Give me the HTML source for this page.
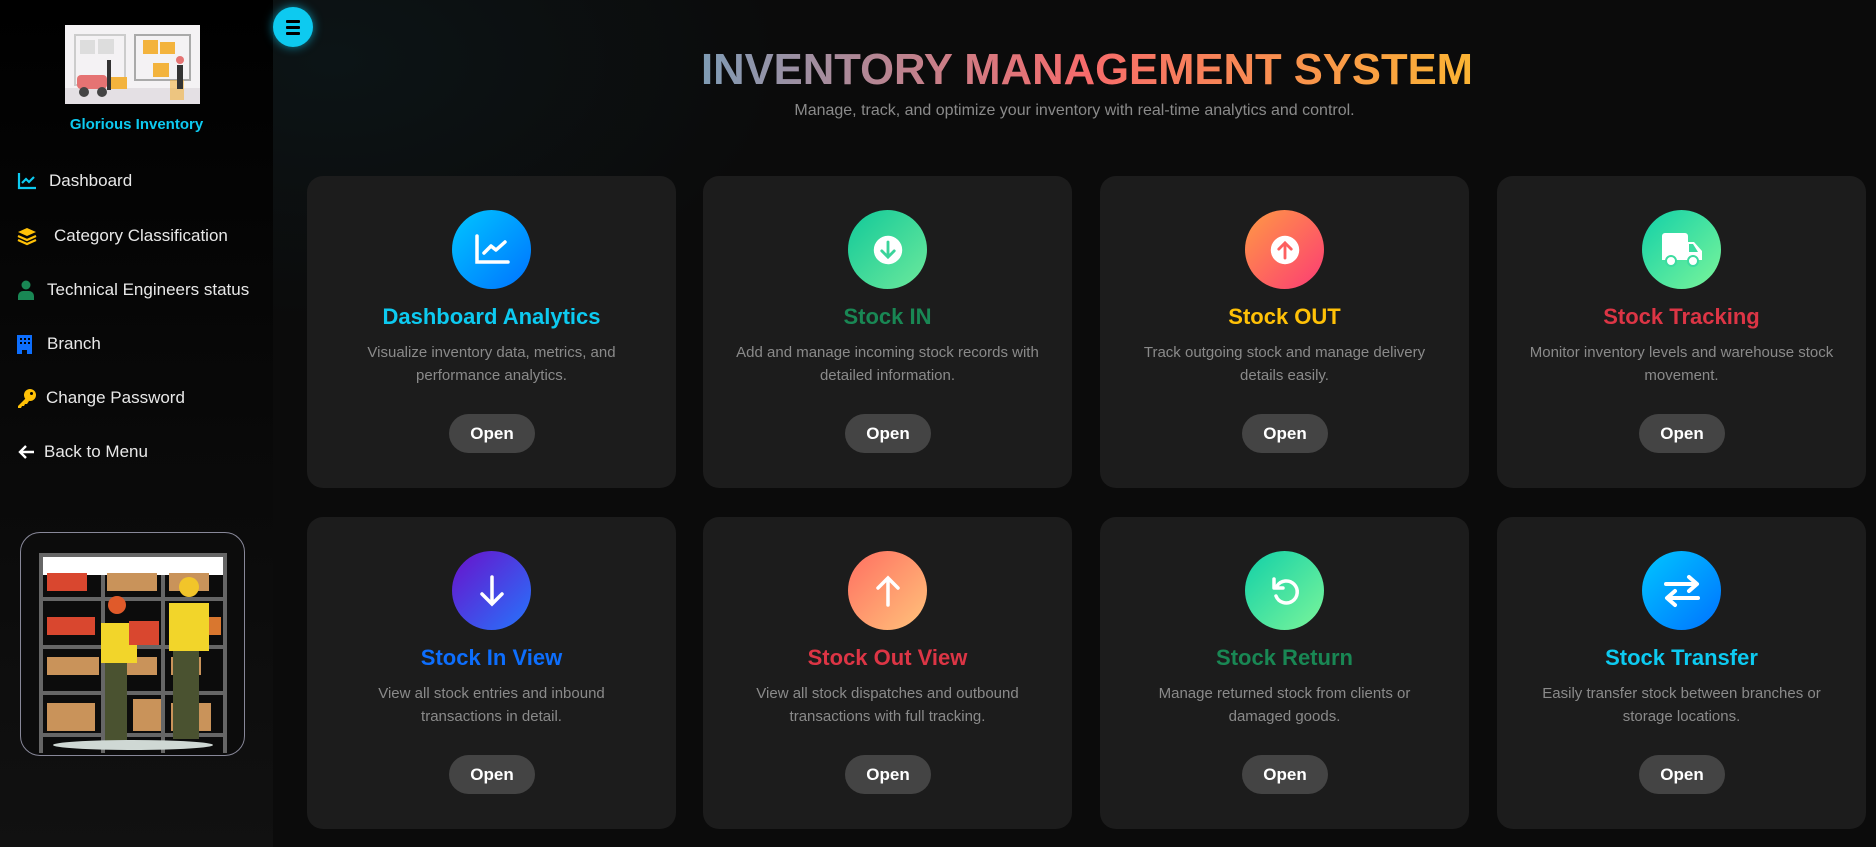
<!DOCTYPE html>
<html><head><meta charset="utf-8"><style>
*{margin:0;padding:0;box-sizing:border-box}
body{width:1876px;height:847px;overflow:hidden;background:#0a0a0a;font-family:"Liberation Sans","DejaVu Sans",sans-serif;position:relative}
.main{position:absolute;left:273px;top:0;width:1603px;height:847px;background:radial-gradient(ellipse 450px 260px at 60px 60px,#0c1416 0%,#0b0b0b 100%)}
.side{position:absolute;left:0;top:0;width:273px;height:847px;background:linear-gradient(#000 0%,#070707 40%,#111 100%)}
.brand{position:absolute;left:0;width:273px;top:116px;text-align:center;color:#0dcaf0;font-weight:bold;font-size:15px}
.nav{position:absolute;left:17px;color:#e8e8e8;font-size:17px;display:flex;align-items:center;height:24px}
.nav svg{margin-right:12px}
.ham{position:absolute;left:273px;top:7px;width:40px;height:40px;border-radius:50%;background:#0dcaf0;box-shadow:0 0 10px #0dcaf0aa}
.ham i{position:absolute;left:13px;width:14px;height:2.5px;background:#000;border-radius:1px}
.card{position:absolute;width:369px;height:312px;background:#1c1c1c;border-radius:16px;text-align:center}
.ic{position:absolute;left:145px;top:34px;width:79px;height:79px;border-radius:50%;display:flex;align-items:center;justify-content:center}
.t{position:absolute;left:0;right:0;top:128px;font-size:22px;font-weight:bold}
.d{position:absolute;left:30px;right:30px;top:165px;font-size:15px;line-height:23px;color:#8a8a8a}
.b{position:absolute;left:142px;top:238px;width:86px;height:39px;border-radius:20px;background:#444;color:#fff;font-weight:bold;font-size:17px;line-height:39px}
.sub{position:absolute;left:273px;width:1603px;top:102px;text-align:center;color:#8a8a8a;font-size:16px}
</style></head><body>
<div class="side">
<svg style="position:absolute;left:65px;top:25px" width="135" height="79" viewBox="0 0 135 79">
<rect width="135" height="79" fill="#f4f2f4"/>
<rect x="0" y="63" width="135" height="16" fill="#e4e0e4"/>
<rect x="10" y="10" width="50" height="50" fill="none" stroke="#ccc" stroke-width="2"/>
<rect x="15" y="15" width="15" height="14" fill="#ddd"/><rect x="33" y="14" width="16" height="15" fill="#ddd"/>
<rect x="70" y="10" width="55" height="45" fill="none" stroke="#aaa" stroke-width="2"/>
<rect x="78" y="15" width="15" height="14" fill="#f3b33d"/><rect x="95" y="17" width="15" height="12" fill="#f3b33d"/>
<rect x="88" y="38" width="16" height="14" fill="#f3b33d"/>
<rect x="105" y="55" width="14" height="20" fill="#f3b33d" opacity=".6"/>
<rect x="12" y="50" width="30" height="14" rx="4" fill="#e57373"/><rect x="42" y="35" width="4" height="30" fill="#333"/>
<rect x="46" y="52" width="16" height="12" fill="#f3b33d"/>
<circle cx="19" cy="67" r="5" fill="#444"/><circle cx="37" cy="67" r="5" fill="#444"/>
<rect x="112" y="40" width="6" height="24" fill="#333"/><circle cx="115" cy="35" r="4" fill="#e57373"/>
</svg>
<div class="brand">Glorious Inventory</div>
<div class="nav" style="top:169px"><svg width="20" height="18" viewBox="0 0 20 18"><path d="M2 1v15h17" fill="none" stroke="#0dcaf0" stroke-width="2.2"/><path d="M5 11l4-4 3 3 5-5" fill="none" stroke="#0dcaf0" stroke-width="2.2"/></svg>Dashboard</div>
<div class="nav" style="top:224px"><svg width="20" height="20" viewBox="0 0 20 20" style="margin-right:17px"><path d="M10 2l9 4-9 4-9-4z" fill="#ffc107"/><path d="M1 10l9 4 9-4M1 14l9 4 9-4" fill="none" stroke="#ffc107" stroke-width="2.2"/></svg>Category Classification</div>
<div class="nav" style="top:278px"><svg width="18" height="20" viewBox="0 0 18 20" style="margin-right:12px"><circle cx="9" cy="5" r="4.5" fill="#198754"/><path d="M1 20v-4a5 5 0 0 1 5-5h6a5 5 0 0 1 5 5v4z" fill="#198754"/></svg>Technical Engineers status</div>
<div class="nav" style="top:332px"><svg width="15" height="19" viewBox="0 0 15 19" style="margin-right:15px"><path d="M0 0h15v19h-5v-4h-5v4h-5z" fill="#0d6efd"/><rect x="3" y="3" width="2" height="2" fill="#000"/><rect x="7" y="3" width="2" height="2" fill="#000"/><rect x="11" y="3" width="2" height="2" fill="#000"/><rect x="3" y="7" width="2" height="2" fill="#000"/><rect x="7" y="7" width="2" height="2" fill="#000"/><rect x="11" y="7" width="2" height="2" fill="#000"/></svg>Branch</div>
<div class="nav" style="top:386px"><svg width="20" height="20" viewBox="0 0 20 20" style="margin-right:9px"><circle cx="13" cy="7" r="6" fill="#ffc107"/><path d="M9 10l-8 8v2h3l1-2h2l1-2h2l2-3z" fill="#ffc107"/><circle cx="14.5" cy="5.5" r="1.5" fill="#000"/></svg>Change Password</div>
<div class="nav" style="top:440px"><svg width="18" height="16" viewBox="0 0 18 16" style="margin-right:9px"><path d="M17 8H3M9 2L3 8l6 6" fill="none" stroke="#fff" stroke-width="2.4"/></svg>Back to Menu</div>
<div style="position:absolute;left:20px;top:532px;width:225px;height:224px;border:1.5px solid #889;border-radius:20px;overflow:hidden;background:#0c0c0c">
<svg width="225" height="224" viewBox="0 0 225 224">
<g fill="#666"><rect x="18" y="20" width="4" height="200"/><rect x="80" y="20" width="4" height="200"/><rect x="140" y="20" width="4" height="200"/><rect x="202" y="20" width="4" height="200"/>
<rect x="18" y="20" width="188" height="4"/><rect x="18" y="64" width="188" height="4"/><rect x="18" y="112" width="188" height="4"/><rect x="18" y="158" width="188" height="4"/><rect x="18" y="200" width="188" height="4"/></g>
<rect x="22" y="24" width="180" height="18" fill="#fff"/>
<rect x="26" y="40" width="40" height="18" fill="#d9472f"/><rect x="86" y="40" width="50" height="18" fill="#c9935a"/><rect x="148" y="40" width="40" height="18" fill="#c9935a"/>
<rect x="26" y="84" width="48" height="18" fill="#d9472f"/><rect x="150" y="84" width="50" height="18" fill="#d9772f"/>
<rect x="26" y="124" width="52" height="18" fill="#c9935a"/><rect x="86" y="124" width="50" height="18" fill="#c9935a"/><rect x="150" y="124" width="30" height="18" fill="#c9935a"/>
<rect x="26" y="170" width="48" height="28" fill="#c9935a"/><rect x="112" y="166" width="28" height="32" fill="#c9935a"/><rect x="150" y="170" width="40" height="28" fill="#c9935a"/>
<rect x="80" y="90" width="36" height="40" fill="#f2d52a"/><rect x="84" y="130" width="22" height="78" fill="#4a5230"/><circle cx="96" cy="72" r="9" fill="#e05a2a"/>
<rect x="148" y="70" width="40" height="48" fill="#f2d52a"/><rect x="152" y="118" width="26" height="88" fill="#4a5230"/><circle cx="168" cy="54" r="10" fill="#f2c52a"/>
<rect x="108" y="88" width="30" height="24" fill="#d9472f"/>
<ellipse cx="112" cy="212" rx="80" ry="5" fill="#cfd8d4"/>
</svg></div>
</div>
<div class="main"></div>
<div class="ham"><i style="top:13px"></i><i style="top:19px"></i><i style="top:25px"></i></div>
<svg style="position:absolute;left:698px;top:38px" width="780" height="56">
<defs><linearGradient id="tg" x1="0" x2="1"><stop offset="0" stop-color="#7f9cb5"/><stop offset=".5" stop-color="#f76b6b"/><stop offset="1" stop-color="#fbb433"/></linearGradient></defs>
<text x="3" y="46" textLength="772" lengthAdjust="spacingAndGlyphs" font-family="Liberation Sans,sans-serif" font-weight="bold" font-size="44" fill="url(#tg)">INVENTORY MANAGEMENT SYSTEM</text></svg>
<div class="sub">Manage, track, and optimize your inventory with real-time analytics and control.</div>

<div class="card" style="left:307px;top:176px"><div class="ic" style="background:linear-gradient(135deg,#00c6ff,#0072ff)"><svg width="36" height="32" viewBox="0 0 36 32"><path d="M3 2v26h31" fill="none" stroke="#fff" stroke-width="3.5" stroke-linecap="round"/><path d="M10 19l7-7 5 4 9-8" fill="none" stroke="#fff" stroke-width="3.5" stroke-linecap="round" stroke-linejoin="round"/></svg></div><div class="t" style="color:#0dcaf0">Dashboard Analytics</div><div class="d">Visualize inventory data, metrics, and performance analytics.</div><div class="b">Open</div></div>
<div class="card" style="left:703px;top:176px"><div class="ic" style="background:linear-gradient(135deg,#11c99a,#6de99b)"><svg width="32" height="32" viewBox="0 0 36 36"><circle cx="18" cy="18" r="16" fill="#fff"/><path d="M18 9v16M11 19l7 7 7-7" fill="none" stroke="#3bd49a" stroke-width="3.2" stroke-linecap="round"/></svg></div><div class="t" style="color:#198754">Stock IN</div><div class="d">Add and manage incoming stock records with detailed information.</div><div class="b">Open</div></div>
<div class="card" style="left:1100px;top:176px"><div class="ic" style="background:linear-gradient(135deg,#ff9a44,#fc3b74)"><svg width="32" height="32" viewBox="0 0 36 36"><circle cx="18" cy="18" r="16" fill="#fff"/><path d="M18 27V11M11 17l7-7 7 7" fill="none" stroke="#fd6060" stroke-width="3.2" stroke-linecap="round"/></svg></div><div class="t" style="color:#ffc107">Stock OUT</div><div class="d">Track outgoing stock and manage delivery details easily.</div><div class="b">Open</div></div>
<div class="card" style="left:1497px;top:176px"><div class="ic" style="background:linear-gradient(135deg,#11d0a8,#7bf59a)"><svg width="44" height="36" viewBox="0 0 44 36"><path d="M2 4a3 3 0 0 1 3-3h20a3 3 0 0 1 3 3v6h6l8 9v9H2z" fill="#fff"/><path d="M29 12v8h9l-5-8z" fill="#3ddca0"/><circle cx="11" cy="29" r="5" fill="#fff" stroke="#3ddca0" stroke-width="2"/><circle cx="33" cy="29" r="5" fill="#fff" stroke="#3ddca0" stroke-width="2"/></svg></div><div class="t" style="color:#dc3545">Stock Tracking</div><div class="d">Monitor inventory levels and warehouse stock movement.</div><div class="b">Open</div></div>

<div class="card" style="left:307px;top:517px"><div class="ic" style="background:linear-gradient(135deg,#6a11cb,#2575fc)"><svg width="30" height="36" viewBox="0 0 30 36"><path d="M15 4v26M5 21l10 10 10-10" fill="none" stroke="#fff" stroke-width="3.5" stroke-linecap="round"/></svg></div><div class="t" style="color:#0d6efd">Stock In View</div><div class="d">View all stock entries and inbound transactions in detail.</div><div class="b">Open</div></div>
<div class="card" style="left:703px;top:517px"><div class="ic" style="background:linear-gradient(135deg,#ff6f61,#ffc37b)"><svg width="30" height="36" viewBox="0 0 30 36"><path d="M15 32V6M5 15L15 5l10 10" fill="none" stroke="#fff" stroke-width="3.5" stroke-linecap="round"/></svg></div><div class="t" style="color:#dc3545">Stock Out View</div><div class="d">View all stock dispatches and outbound transactions with full tracking.</div><div class="b">Open</div></div>
<div class="card" style="left:1100px;top:517px"><div class="ic" style="background:linear-gradient(135deg,#11d0a8,#7bf59a)"><svg width="34" height="34" viewBox="0 0 34 34"><path d="M9 12A11 11 0 1 1 8 22" fill="none" stroke="#fff" stroke-width="3.5" stroke-linecap="round"/><path d="M6 5v9h9" fill="none" stroke="#fff" stroke-width="3.5" stroke-linecap="round" stroke-linejoin="round"/></svg></div><div class="t" style="color:#198754">Stock Return</div><div class="d">Manage returned stock from clients or damaged goods.</div><div class="b">Open</div></div>
<div class="card" style="left:1497px;top:517px"><div class="ic" style="background:linear-gradient(135deg,#00c6ff,#0072ff)"><svg width="40" height="36" viewBox="0 0 40 36"><path d="M4 11h30M27 4l8 7-8 7" fill="none" stroke="#fff" stroke-width="4" stroke-linecap="round" stroke-linejoin="round"/><path d="M36 25H6M13 18l-8 7 8 7" fill="none" stroke="#fff" stroke-width="4" stroke-linecap="round" stroke-linejoin="round"/></svg></div><div class="t" style="color:#0dcaf0">Stock Transfer</div><div class="d">Easily transfer stock between branches or storage locations.</div><div class="b">Open</div></div>
</body></html>
